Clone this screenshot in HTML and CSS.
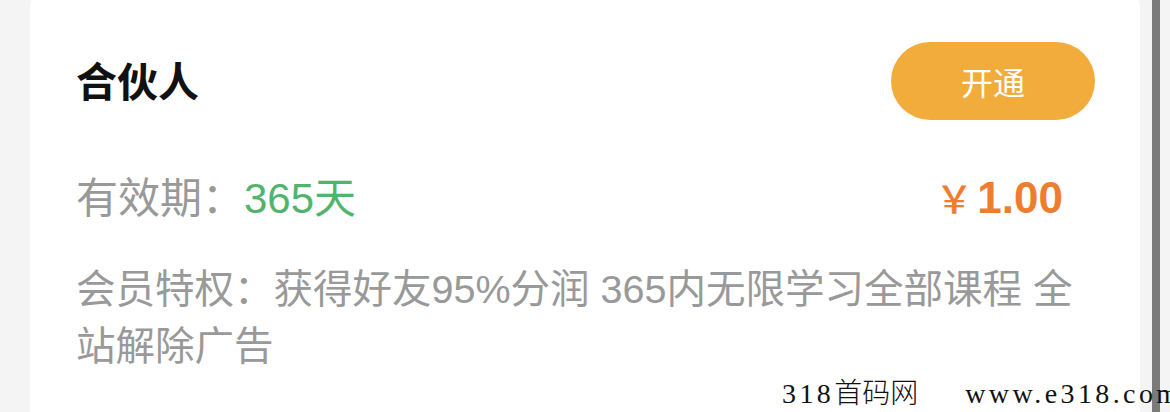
FILE: index.html
```html
<!DOCTYPE html>
<html lang="zh-CN">
<head>
<meta charset="utf-8">
<title>合伙人</title>
<link rel="stylesheet" href="styles.css">
</head>
<body>
<div class="page">
  <div class="card">
    <div class="head">
      <div class="title">合伙人</div>
      <button class="open">开通</button>
    </div>
    <div class="meta">
      <div class="valid"><span class="label">有效期：</span><span class="days">365天</span></div>
      <div class="price"><span class="yen">￥</span>1.00</div>
    </div>
    <div class="desc">会员特权：获得好友95%分润 365内无限学习全部课程 全站解除广告</div>
  </div>
  <div class="scrollbar"></div>
</div>
<div class="watermark"><span class="wm-site"><span class="wm-num">318</span>首码网</span><span class="wm-url">www.e318.com</span></div>
</body>
</html>
```

FILE: styles.css
```css
html, body {
  margin: 0;
  padding: 0;
}
body {
  background: #f4f4f4;
  width: 1170px;
  height: 412px;
  overflow: hidden;
  position: relative;
  font-family: "Liberation Sans", "Noto Sans CJK SC", sans-serif;
}
.page {
  display: flex;
  align-items: flex-start;
  padding-left: 30px;
  height: 412px;
  overflow: hidden;
}
.card {
  width: 1110px;
  height: 440px;
  margin-top: -12px;
  background: #ffffff;
  border-radius: 20px 20px 0 0;
  padding: 54px 45px 0 46px;
  box-sizing: border-box;
  flex: none;
}
.head {
  display: flex;
  justify-content: space-between;
  align-items: center;
}
.title {
  font-family: "Noto Sans CJK SC", sans-serif;
  font-size: 41px;
  font-weight: 700;
  color: #111111;
  line-height: 56px;
  margin-top: -4px;
}
.open {
  width: 204px;
  height: 78px;
  border: none;
  border-radius: 39px;
  background: #f2ac3c;
  color: #ffffff;
  font-family: "Noto Sans CJK SC", sans-serif;
  font-size: 32px;
  padding: 0;
}
.meta {
  display: flex;
  justify-content: space-between;
  align-items: center;
  margin-top: 49px;
  height: 56px;
}
.valid {
  font-size: 42px;
  line-height: 56px;
}
.label {
  font-family: "Noto Sans CJK SC", sans-serif;
  color: #999999;
}
.days {
  color: #52b46c;
}
.price {
  color: #ee7e2e;
  font-size: 44px;
  font-weight: 700;
  margin-right: 32px;
  line-height: 56px;
}
.yen {
  font-family: "Noto Sans CJK SC", sans-serif;
  font-size: 38px;
  font-weight: 500;
  margin-right: 4px;
}
.desc {
  margin-top: 36px;
  font-size: 39.5px;
  line-height: 57px;
  color: #999999;
}
.scrollbar {
  flex: none;
  width: 8px;
  height: 412px;
  margin-left: 12px;
  background: #7b7b7b;
}
.watermark {
  position: absolute;
  left: 782px;
  top: 379px;
  display: flex;
  gap: 47px;
  font-family: "Liberation Serif", "Noto Sans CJK SC", serif;
  font-size: 28px;
  line-height: 30px;
  color: #111111;
  white-space: nowrap;
}
.wm-site {
  font-weight: 300;
}
.wm-num,
.wm-url {
  letter-spacing: 3.4px;
}
```
